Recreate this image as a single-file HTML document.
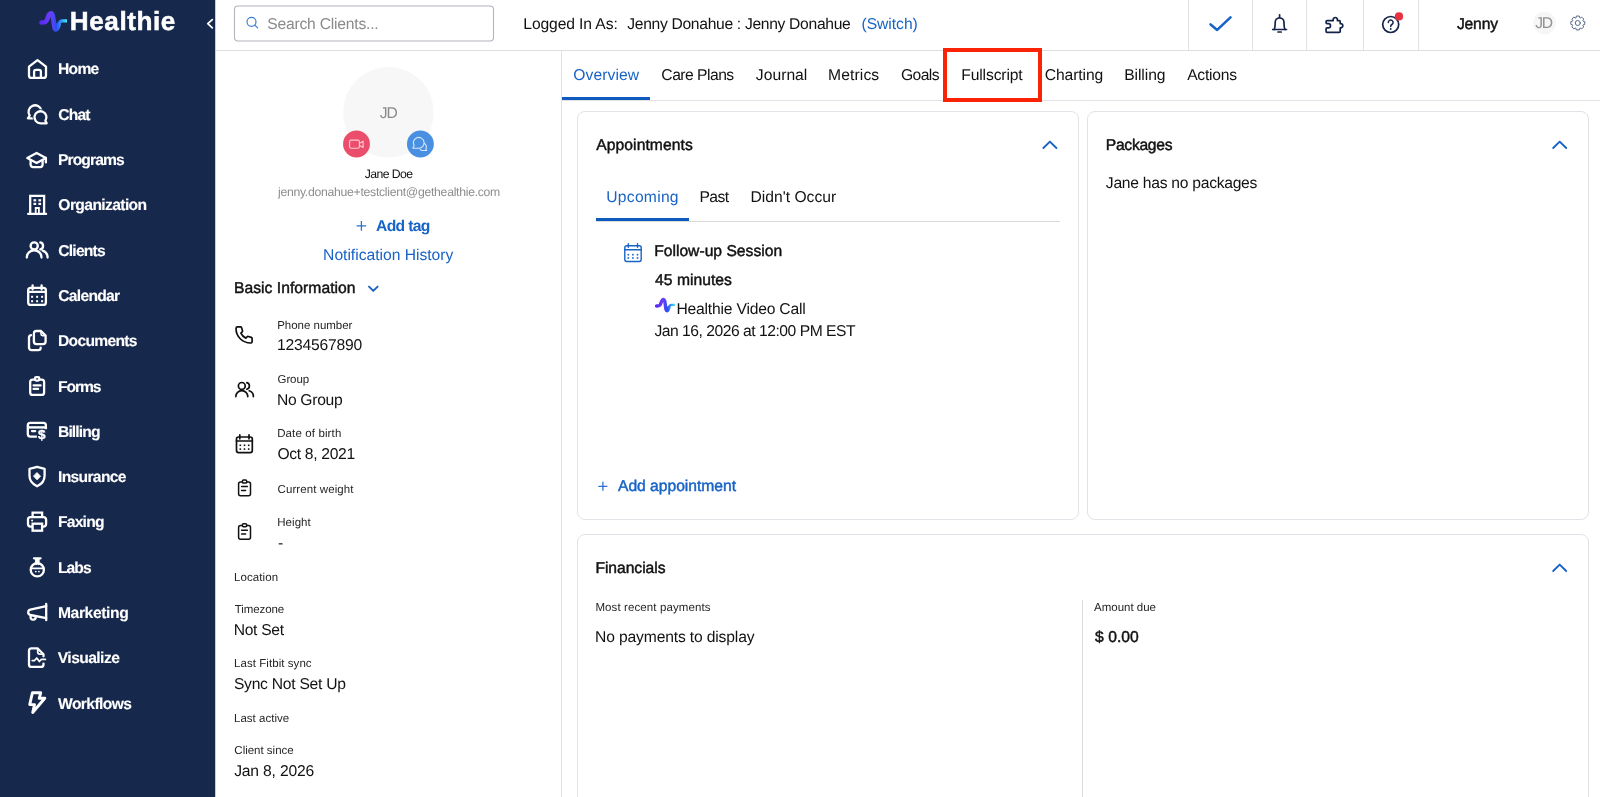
<!DOCTYPE html>
<html lang="en"><head><meta charset="utf-8"><title>Healthie</title>
<style>
html,body{margin:0;padding:0;background:#fff;}
body{width:1600px;height:797px;overflow:hidden;font-family:"Liberation Sans",sans-serif;}
#app{position:relative;width:1600px;height:797px;overflow:hidden;background:#fff;}
.x{will-change:transform;text-rendering:geometricPrecision;}
.x{position:absolute;white-space:pre;font-weight:400;}
.b{font-weight:700;}
.m{-webkit-text-stroke:0.45px currentColor;}
.abs{position:absolute;}
.card{position:absolute;border:1px solid #e1e3e8;border-radius:8px;background:#fff;box-sizing:border-box;}
svg{position:absolute;overflow:visible;}

</style></head>
<body>
<div id="app">
<!-- sidebar -->
<div class="abs" style="left:0;top:0;width:215px;height:797px;background:#17284d;"></div>
<div class="abs" style="left:215px;top:0;width:1px;height:797px;background:#c9ccd3;"></div>
<!-- topbar border -->
<div class="abs" style="left:216px;top:50px;width:1384px;height:1px;background:#dedede;"></div>
<!-- search box -->
<!-- topbar separators -->
<div class="abs" style="left:1188px;top:0;width:1px;height:50px;background:#e2e2e2;"></div>
<div class="abs" style="left:1252px;top:0;width:1px;height:50px;background:#e2e2e2;"></div>
<div class="abs" style="left:1306px;top:0;width:1px;height:50px;background:#e2e2e2;"></div>
<div class="abs" style="left:1363px;top:0;width:1px;height:50px;background:#e2e2e2;"></div>
<div class="abs" style="left:1418px;top:0;width:1px;height:50px;background:#e2e2e2;"></div>
<!-- client panel right border -->
<div class="abs" style="left:561px;top:51px;width:1px;height:746px;background:#e2e2e2;"></div>
<!-- avatar -->
<!-- user avatar top right -->
<!-- tabs border & underline -->
<div class="abs" style="left:562px;top:100px;width:1038px;height:1px;background:#e2e2e2;"></div>
<div class="abs" style="left:562px;top:97px;width:88px;height:3px;background:#0f5abf;"></div>
<!-- cards -->
<div class="card" style="left:577px;top:111px;width:502px;height:409px;"></div>
<div class="card" style="left:1087px;top:111px;width:502px;height:409px;"></div>
<div class="card" style="left:577px;top:534px;width:1012px;height:300px;"></div>
<!-- appt subtabs line -->
<div class="abs" style="left:596px;top:221px;width:464px;height:1px;background:#d9d9d9;"></div>
<div class="abs" style="left:596px;top:218px;width:93px;height:3px;background:#0f5abf;"></div>
<!-- financial divider -->
<div class="abs" style="left:1082px;top:600px;width:1px;height:197px;background:#dcdcdc;"></div>
<!-- red highlight -->
<div class="abs" style="left:943px;top:48px;width:99px;height:54px;border:4px solid #fb2306;box-sizing:border-box;"></div>
<svg width="1600" height="797" viewBox="0 0 1600 797" style="left:0;top:0;" fill="none" stroke-linecap="round" stroke-linejoin="round">
<defs>
<linearGradient id="lg" gradientUnits="userSpaceOnUse" x1="39" y1="0" x2="67" y2="0">
<stop offset="0" stop-color="#5426f4"/><stop offset="0.42" stop-color="#6a3ff8"/><stop offset="0.62" stop-color="#2c4cf6"/><stop offset="0.8" stop-color="#2f9af6"/><stop offset="1" stop-color="#43e8fa"/>
</linearGradient>
</defs>
<rect x="234.5" y="6" width="259" height="35" rx="3.5" stroke="#b3b4bc" stroke-width="1.1" fill="#fff"/>
<circle cx="388.4" cy="112.2" r="45.2" fill="#f7f7f7"/>
<circle cx="356.5" cy="143.95" r="13.45" fill="#eb4e6c"/>
<circle cx="420.4" cy="143.95" r="13.45" fill="#4990e2"/>
<circle cx="1544.5" cy="23" r="11.4" fill="#f6f6f6"/>
<!-- logo mark -->
<g id="logo"><path d="M41.5 22.5 C45 22.5 46.2 22.3 47.4 18.8 C48.6 15.2 49.3 13.3 51 13.3 C52.7 13.3 53.1 16.6 53.7 21.5 C54.3 26.4 54.5 29.3 55.9 29.3 C57.3 29.3 57.8 27 58.6 24.6" stroke="url(#lg)" stroke-width="4.7"/>
<path d="M58.1 26.2 C59 22.6 59.8 20.9 62 20.9 H67" stroke="url(#lg)" stroke-width="3.1" stroke-linecap="butt"/></g>
<!-- collapse chevron -->
<path d="M212.3 19.6 L207.8 23.7 L212.3 27.8" stroke="#fff" stroke-width="1.8"/>
<g stroke="#fff" stroke-width="2.3">
<!-- home -->
<path d="M29 66.6 L37.5 60.1 L46 66.6 V75.4 a2.5 2.5 0 0 1 -2.5 2.5 H31.5 a2.5 2.5 0 0 1 -2.5 -2.5 Z"/>
<path d="M34.1 77.9 V71.6 a1.8 1.8 0 0 1 1.8 -1.8 h3.2 a1.8 1.8 0 0 1 1.8 1.8 V77.9"/>
<!-- chat -->
<path d="M35 118.3 H27.9 L29.7 115.5 A6.5 6.5 0 1 1 35 118.3 Z"/>
<circle cx="40.5" cy="117.3" r="6" fill="#17284d" stroke="#17284d" stroke-width="4"/>
<path d="M40.5 123.3 H46.7 L45.4 120.7 A6 6 0 1 0 40.5 123.3 Z" fill="#17284d"/>
<!-- programs -->
<path d="M36.6 153 L45.9 158 L36.6 163 L27.3 158 Z"/>
<path d="M45.9 158 V162.4"/>
<path d="M30.6 160.4 V164.6 a2.5 2.5 0 0 0 2.5 2.5 H40.1 a2.5 2.5 0 0 0 2.5 -2.5 V160.4"/>
<!-- organization -->
<path d="M30.2 213.9 V195.8 H44.1 V213.9 M28.2 213.9 H46.1" stroke-linejoin="miter"/>
<path d="M35.7 213.5 V208 H38.9 V213.5" stroke-linejoin="miter" stroke-width="1.8"/>
<g fill="#fff" stroke="none"><rect x="33.5" y="199.2" width="2.7" height="2.2"/><rect x="38.4" y="199.2" width="2.7" height="2.2"/><rect x="33.5" y="202.8" width="2.7" height="2.2"/><rect x="38.4" y="202.8" width="2.7" height="2.2"/></g>
<!-- clients -->
<circle cx="34.2" cy="245.9" r="3.6"/>
<path d="M26.8 257.6 a7.35 7.35 0 0 1 14.7 0"/>
<path d="M40.3 242.4 A3.6 3.6 0 0 1 40.3 249.4"/>
<path d="M42.6 250.7 A7.3 7.3 0 0 1 47.6 257.6"/>
<!-- calendar -->
<rect x="28.2" y="287.8" width="17.7" height="17.1" rx="2.5"/>
<path d="M32.6 285.3 V289.3 M41.6 285.3 V289.3 M28.2 291.8 H45.9"/>
<g fill="#fff" stroke="none"><rect x="31.1" y="295.8" width="2" height="2"/><rect x="36.1" y="295.8" width="2" height="2"/><rect x="41.1" y="295.8" width="2" height="2"/><rect x="31.1" y="300.2" width="2" height="2"/><rect x="36.1" y="300.2" width="2" height="2"/><rect x="41.1" y="300.2" width="2" height="2"/></g>
<!-- documents -->
<path d="M36.4 331 H41 L45.6 335.6 V341.6 a2.5 2.5 0 0 1 -2.5 2.5 H36.4 a2.5 2.5 0 0 1 -2.5 -2.5 V333.5 a2.5 2.5 0 0 1 2.5 -2.5 Z"/>
<path d="M41 331.4 V334 a1.6 1.6 0 0 0 1.6 1.6 H45.2" stroke-width="1.6"/>
<path d="M31 335.2 a2.4 2.4 0 0 0 -2 2.4 V347.6 a2.5 2.5 0 0 0 2.5 2.5 H38.2 a2.5 2.5 0 0 0 2.5 -2.4"/>
<!-- forms -->
<rect x="30.2" y="379.6" width="13.9" height="15.3" rx="2.5"/>
<rect x="35" y="377.2" width="4.3" height="3.4" rx="1.3" fill="#17284d"/>
<path d="M33.6 385.4 H40.6 M33.6 388.9 H38.1"/>
<!-- billing -->
<rect x="27.8" y="422.9" width="18.1" height="13.7" rx="2.5"/>
<path d="M28.5 427.4 H45.2" stroke-width="2.4" stroke-linecap="butt"/>
<path d="M32 431.1 H35.2"/>
<!-- insurance -->
<path d="M37.1 466.9 L44.6 468.8 V475.8 C44.6 481 41.2 484.4 37.1 486.3 C33 484.4 29.5 481 29.5 475.8 V468.8 Z"/>
<path d="M37.1 472.6 L40.7 476.3 L37.1 480 L33.5 476.3 Z" fill="#fff" stroke-width="0.6"/>
<!-- faxing -->
<path d="M32.6 516.6 V512.6 H42.1 V516.6" stroke-linejoin="miter"/>
<path d="M32 526.6 H30.5 a2.5 2.5 0 0 1 -2.5 -2.5 V519.6 a2.5 2.5 0 0 1 2.5 -2.5 H43.6 a2.5 2.5 0 0 1 2.5 2.5 V524.1 a2.5 2.5 0 0 1 -2.5 2.5 H42.6"/>
<rect x="32.6" y="523.7" width="9.5" height="7" stroke-linejoin="miter"/>
<circle cx="32.1" cy="520.5" r="1" fill="#fff" stroke="none"/>
<!-- labs -->
<path d="M34 558.3 H40.6 M36.2 558.6 V564 M38.5 558.6 V564"/>
<circle cx="37.3" cy="569.8" r="6.6"/>
<path d="M31 568.4 H43.6" stroke-width="1.8"/>
<circle cx="35.8" cy="571.6" r="0.9" fill="#fff" stroke="none"/><circle cx="38.9" cy="571.6" r="0.9" fill="#fff" stroke="none"/>
<!-- marketing -->
<path d="M46.2 604 V620.2"/>
<path d="M46.2 606.1 L30.3 609.7 A2.72 2.72 0 0 0 30.3 615 L46.2 618.1"/>
<path d="M30.6 615.6 V617.6 a2 2 0 0 0 2 2 H33.6 a2 2 0 0 0 2 -2 V616.6"/>
<!-- visualize -->
<path d="M43.5 656.3 V654.3 L37.5 648.3 H31.5 a2.5 2.5 0 0 0 -2.5 2.5 V664.4 a2.5 2.5 0 0 0 2.5 2.5 H41 a2.5 2.5 0 0 0 2.5 -2.5 V663.6"/>
<path d="M37.7 648.8 V652 a2.2 2.2 0 0 0 2.2 2.2 H43" stroke-width="1.7"/>
<path d="M32.2 660.6 H34.4 L36.8 658 L39.3 661.5 L41.4 659.3 H45.4" stroke-width="1.7"/>
<!-- workflows -->
<path d="M32.4 692.8 H40.7 L39.2 698.3 H44.8 L32.7 712.5 L34.5 704.6 H29.7 Z" stroke-width="2.9"/>
</g>
<!-- billing $ halo -->
<rect x="36.9" y="429.2" width="11" height="13" fill="#17284d"/>
<!-- search icon -->
<circle cx="251.5" cy="21.8" r="4.5" stroke="#3b7fd6" stroke-width="1.2"/>
<path d="M254.9 25.2 L257.6 27.9" stroke="#3b7fd6" stroke-width="1.2"/>
<!-- check -->
<path d="M1210.6 24.4 L1217.2 29.9 L1230.5 17.4" stroke="#1863c6" stroke-width="2.6"/>
<!-- bell -->
<g stroke="#14234a" stroke-width="1.7">
<path d="M1272.7 29.5 H1286.5"/>
<path d="M1274.2 29.5 C1275.3 27.6 1275.2 25.2 1275.2 22.3 a4.4 4.4 0 0 1 8.8 0 C1284 25.2 1283.9 27.6 1285 29.5 M1279.6 14.8 V17"/>
<path d="M1278 32 H1281.2"/>
<!-- puzzle -->
<path d="M1333.2 19.6 a2.1 2.1 0 1 1 4.2 0 V20.6 H1339.3 a0.9 0.9 0 0 1 0.9 0.9 V23.6 H1340.7 a2.1 2.1 0 1 1 0 4.2 H1340.2 V31.4 a0.9 0.9 0 0 1 -0.9 0.9 H1327 a0.9 0.9 0 0 1 -0.9 -0.9 V28.8 a0.9 0.9 0 0 1 0.9 -0.9 H1328.4 a2.1 2.1 0 1 0 0 -4.2 H1327 a0.9 0.9 0 0 1 -0.9 -0.9 V21.5 a0.9 0.9 0 0 1 0.9 -0.9 H1333.2 Z"/>
<!-- help -->
<circle cx="1390.7" cy="24.5" r="8"/>
<path d="M1388.3 22.4 a2.4 2.4 0 1 1 3.6 2.1 c-0.8 0.5 -1.2 0.9 -1.2 1.9" stroke-width="1.5"/>
<circle cx="1390.7" cy="29" r="0.95" fill="#14234a" stroke="none"/>
</g>
<circle cx="1399" cy="16.4" r="4.1" fill="#e9303f"/>
<!-- gear -->
<g stroke="#5a688f" stroke-width="1">
<circle cx="1577.8" cy="23" r="2.5"/>
<path d="M1575.96 17.71 L1576.39 16.04 L1579.21 16.04 L1579.64 17.71 L1580.23 17.96 L1581.72 17.08 L1583.72 19.08 L1582.84 20.57 L1583.09 21.16 L1584.76 21.59 L1584.76 24.41 L1583.09 24.84 L1582.84 25.43 L1583.72 26.92 L1581.72 28.92 L1580.23 28.04 L1579.64 28.29 L1579.21 29.96 L1576.39 29.96 L1575.96 28.29 L1575.37 28.04 L1573.88 28.92 L1571.88 26.92 L1572.76 25.43 L1572.51 24.84 L1570.84 24.41 L1570.84 21.59 L1572.51 21.16 L1572.76 20.57 L1571.88 19.08 L1573.88 17.08 L1575.37 17.96 Z"/>
</g>
<!-- avatar action icons -->
<g stroke="#ffd0d9" stroke-width="1.1" opacity="0.95">
<rect x="349.6" y="140.1" width="9.8" height="8.2" rx="1.6"/>
<path d="M359.6 143.2 L363.1 141.2 V147.4 L359.6 145.4"/>
</g>
<g stroke="#d9e8fb" stroke-width="1.1">
<path d="M424.3 143.6 A3.9 3.9 0 0 1 425.9 149 L426.6 150.5 H422.8 A3.9 3.9 0 0 1 420.2 149.5"/>
<path d="M418.6 148.2 H412.9 L414.1 145.6 A5.4 5.4 0 1 1 418.6 148.2 Z"/>
</g>
<!-- plus signs -->
<path d="M356.6 225.9 H366.2 M361.4 221.1 V230.7" stroke="#2a70cc" stroke-width="1.25" stroke-linecap="butt"/>
<path d="M598.4 486.3 H607.4 M602.9 481.8 V490.8" stroke="#2a70cc" stroke-width="1.25" stroke-linecap="butt"/>
<!-- Basic info chevron -->
<path d="M369 286.6 L373.3 290.9 L377.6 286.6" stroke="#1863c6" stroke-width="1.9"/>
<!-- card chevrons -->
<path d="M1043.4 148 L1049.9 141.6 L1056.4 148" stroke="#1863c6" stroke-width="1.9"/>
<path d="M1553.2 148 L1559.7 141.6 L1566.2 148" stroke="#1863c6" stroke-width="1.9"/>
<path d="M1553.2 571 L1559.7 564.6 L1566.2 571" stroke="#1863c6" stroke-width="1.9"/>
<!-- client panel icons -->
<g stroke="#111" stroke-width="1.7">
<!-- phone -->
<path d="M237.6 326.9 h2.9 a1.2 1.2 0 0 1 1.1 0.8 l0.9 3 a1.2 1.2 0 0 1 -0.3 1.2 l-1.3 1.3 a9.6 9.6 0 0 0 4.9 4.9 l1.3 -1.3 a1.2 1.2 0 0 1 1.2 -0.3 l3 0.9 a1.2 1.2 0 0 1 0.8 1.1 v2.9 a1.6 1.6 0 0 1 -1.6 1.6 A14.5 14.5 0 0 1 236 328.500 a1.6 1.6 0 0 1 1.6 -1.6 Z"/>
<!-- group -->
<circle cx="241.8" cy="385.9" r="3.4"/>
<path d="M235.8 396.6 a6 6 0 0 1 12 0"/>
<path d="M246.8 382.6 A3.4 3.4 0 0 1 246.8 389.2"/>
<path d="M249.2 390.8 A6 6 0 0 1 253.4 396.6"/>
<!-- calendar -->
<rect x="236.5" y="437" width="15.8" height="15.6" rx="2"/>
<path d="M239.8 434.8 V438.8 M249 434.8 V438.8 M236.5 441 H252.3"/>
</g>
<g fill="#111"><rect x="239.5" y="444.5" width="1.6" height="1.6"/><rect x="243.7" y="444.5" width="1.6" height="1.6"/><rect x="247.9" y="444.5" width="1.6" height="1.6"/><rect x="239.5" y="448.3" width="1.6" height="1.6"/><rect x="243.7" y="448.3" width="1.6" height="1.6"/><rect x="247.9" y="448.3" width="1.6" height="1.6"/></g>
<g stroke="#111" stroke-width="1.5">
<rect x="238.6" y="482" width="11.9" height="13.7" rx="2"/>
<rect x="242.4" y="480.1" width="4.3" height="3" rx="1.1" fill="#fff"/>
<path d="M241.6 486.6 H247.4 M241.6 490.4 H245.6"/>
<rect x="238.6" y="525.6" width="11.9" height="13.7" rx="2"/>
<rect x="242.4" y="523.7" width="4.3" height="3" rx="1.1" fill="#fff"/>
<path d="M241.6 530.2 H247.4 M241.6 534 H245.6"/>
</g>
<!-- appointment calendar -->
<g stroke="#1863c6" stroke-width="1.4">
<rect x="624.8" y="245.8" width="16.4" height="15.7" rx="2"/>
<path d="M628.3 243.7 V247.3 M637.5 243.7 V247.3 M624.8 249.8 H641.2"/>
</g>
<g fill="#1863c6"><rect x="627.5" y="253.9" width="1.6" height="1.6"/><rect x="632.1" y="253.9" width="1.6" height="1.6"/><rect x="636.7" y="253.9" width="1.6" height="1.6"/><rect x="627.5" y="257.2" width="1.6" height="1.6"/><rect x="632.1" y="257.2" width="1.6" height="1.6"/><rect x="636.7" y="257.2" width="1.6" height="1.6"/></g>
<!-- small logo -->
<g transform="translate(626.7 289.8) scale(0.72)"><use href="#logo"/></g>
</svg>
<div class="dl" style="position:absolute;white-space:pre;font-weight:700;will-change:transform;left:37.5px;top:427.4px;font-size:13.5px;line-height:15px;color:#fff;-webkit-text-stroke:0.4px #fff;">$</div>

<div class="x b" style="left:57px;padding-left:0.96px;top:59px;font-size:15.67px;line-height:21px;color:#ffffff;letter-spacing:-0.723px;-webkit-text-stroke:0.12px #fff;">Home</div>
<div class="x b" style="left:58px;padding-left:0.30px;top:105px;font-size:15.67px;line-height:21px;color:#ffffff;letter-spacing:-0.886px;-webkit-text-stroke:0.12px #fff;">Chat</div>
<div class="x b" style="left:57px;padding-left:0.96px;top:150px;font-size:15.67px;line-height:21px;color:#ffffff;letter-spacing:-0.907px;-webkit-text-stroke:0.12px #fff;">Programs</div>
<div class="x b" style="left:58px;padding-left:0.36px;top:195px;font-size:15.67px;line-height:21px;color:#ffffff;letter-spacing:-0.629px;-webkit-text-stroke:0.12px #fff;">Organization</div>
<div class="x b" style="left:58px;padding-left:0.30px;top:241px;font-size:15.67px;line-height:21px;color:#ffffff;letter-spacing:-0.792px;-webkit-text-stroke:0.12px #fff;">Clients</div>
<div class="x b" style="left:58px;padding-left:0.30px;top:286px;font-size:15.67px;line-height:21px;color:#ffffff;letter-spacing:-0.736px;-webkit-text-stroke:0.12px #fff;">Calendar</div>
<div class="x b" style="left:57px;padding-left:0.96px;top:331px;font-size:15.67px;line-height:21px;color:#ffffff;letter-spacing:-0.712px;-webkit-text-stroke:0.12px #fff;">Documents</div>
<div class="x b" style="left:57px;padding-left:0.96px;top:377px;font-size:15.67px;line-height:21px;color:#ffffff;letter-spacing:-1.088px;-webkit-text-stroke:0.12px #fff;">Forms</div>
<div class="x b" style="left:57px;padding-left:0.96px;top:422px;font-size:15.67px;line-height:21px;color:#ffffff;letter-spacing:-0.870px;-webkit-text-stroke:0.12px #fff;">Billing</div>
<div class="x b" style="left:57px;padding-left:0.96px;top:467px;font-size:15.67px;line-height:21px;color:#ffffff;letter-spacing:-0.676px;-webkit-text-stroke:0.12px #fff;">Insurance</div>
<div class="x b" style="left:57px;padding-left:0.96px;top:512px;font-size:15.67px;line-height:21px;color:#ffffff;letter-spacing:-0.776px;-webkit-text-stroke:0.12px #fff;">Faxing</div>
<div class="x b" style="left:57px;padding-left:0.96px;top:558px;font-size:15.67px;line-height:21px;color:#ffffff;letter-spacing:-0.961px;-webkit-text-stroke:0.12px #fff;">Labs</div>
<div class="x b" style="left:57px;padding-left:0.96px;top:603px;font-size:15.67px;line-height:21px;color:#ffffff;letter-spacing:-0.392px;-webkit-text-stroke:0.12px #fff;">Marketing</div>
<div class="x b" style="left:57px;padding-left:0.80px;top:648px;font-size:15.67px;line-height:21px;color:#ffffff;letter-spacing:-0.585px;-webkit-text-stroke:0.12px #fff;">Visualize</div>
<div class="x b" style="left:58px;padding-left:0.06px;top:694px;font-size:15.67px;line-height:21px;color:#ffffff;letter-spacing:-0.616px;-webkit-text-stroke:0.12px #fff;">Workflows</div>
<div class="x b" style="left:69px;padding-left:0.82px;top:4px;font-size:26.12px;line-height:34px;color:#ffffff;letter-spacing:0.569px;-webkit-text-stroke:0.5px #fff;">Healthie</div>
<div class="x" style="left:267px;padding-left:0.31px;top:14px;font-size:15.67px;line-height:21px;color:#8b8b8b;letter-spacing:-0.220px;">Search Clients...</div>
<div class="x" style="left:523px;padding-left:0.30px;top:14px;font-size:15.67px;line-height:21px;color:#121212;letter-spacing:-0.110px;">Logged In As:</div>
<div class="x" style="left:627px;padding-left:0.26px;top:14px;font-size:15.67px;line-height:21px;color:#121212;letter-spacing:-0.318px;">Jenny Donahue : Jenny Donahue</div>
<div class="x" style="left:861px;padding-left:0.48px;top:14px;font-size:15.67px;line-height:21px;color:#1863c6;letter-spacing:-0.031px;">(Switch)</div>
<div class="x m" style="left:1456px;padding-left:0.94px;top:14px;font-size:15.67px;line-height:21px;color:#121212;letter-spacing:-0.179px;">Jenny</div>
<div class="x" style="left:1535px;padding-left:0.36px;top:13px;font-size:15.67px;line-height:21px;color:#929292;letter-spacing:-1.476px;">JD</div>
<div class="x" style="left:379px;padding-left:0.76px;top:103px;font-size:15.67px;line-height:21px;color:#8a8a8a;letter-spacing:-1.076px;">JD</div>
<div class="x" style="left:364px;padding-left:0.68px;top:165px;font-size:12.24px;line-height:18px;color:#121212;letter-spacing:-0.560px;">Jane Doe</div>
<div class="x" style="left:277px;padding-left:0.97px;top:183px;font-size:12.24px;line-height:18px;color:#8d8d8d;letter-spacing:-0.289px;">jenny.donahue+testclient@gethealthie.com</div>
<div class="x b" style="left:376px;padding-left:0.02px;top:216px;font-size:15.67px;line-height:21px;color:#1863c6;letter-spacing:-0.658px;">Add tag</div>
<div class="x" style="left:323px;padding-left:0.10px;top:245px;font-size:15.67px;line-height:21px;color:#1863c6;letter-spacing:-0.019px;">Notification History</div>
<div class="x m" style="left:233px;padding-left:0.97px;top:278px;font-size:15.67px;line-height:21px;color:#121212;letter-spacing:0.036px;">Basic Information</div>
<div class="x" style="left:277px;padding-left:0.20px;top:318px;font-size:11.49px;line-height:16px;color:#262626;letter-spacing:-0.010px;">Phone number</div>
<div class="x" style="left:276px;padding-left:0.99px;top:335px;font-size:15.67px;line-height:21px;color:#121212;letter-spacing:-0.200px;">1234567890</div>
<div class="x" style="left:277px;padding-left:0.57px;top:372px;font-size:11.49px;line-height:16px;color:#262626;letter-spacing:-0.107px;">Group</div>
<div class="x" style="left:276px;padding-left:0.88px;top:390px;font-size:15.67px;line-height:21px;color:#121212;letter-spacing:-0.300px;">No Group</div>
<div class="x" style="left:277px;padding-left:0.20px;top:426px;font-size:11.49px;line-height:16px;color:#262626;letter-spacing:0.127px;">Date of birth</div>
<div class="x" style="left:277px;padding-left:0.43px;top:444px;font-size:15.67px;line-height:21px;color:#121212;letter-spacing:-0.322px;">Oct 8, 2021</div>
<div class="x" style="left:277px;padding-left:0.57px;top:482px;font-size:11.49px;line-height:16px;color:#262626;letter-spacing:0.090px;">Current weight</div>
<div class="x" style="left:277px;padding-left:0.19px;top:515px;font-size:11.49px;line-height:16px;color:#262626;letter-spacing:0.078px;">Height</div>
<div class="x" style="left:277px;padding-left:0.92px;top:533px;font-size:15.67px;line-height:21px;color:#121212;">-</div>
<div class="x" style="left:234px;padding-left:0.00px;top:570px;font-size:11.49px;line-height:16px;color:#262626;letter-spacing:0.096px;">Location</div>
<div class="x" style="left:234px;padding-left:0.71px;top:602px;font-size:11.49px;line-height:16px;color:#262626;letter-spacing:-0.076px;">Timezone</div>
<div class="x" style="left:233px;padding-left:0.70px;top:620px;font-size:15.67px;line-height:21px;color:#121212;letter-spacing:-0.297px;">Not Set</div>
<div class="x" style="left:234px;padding-left:0.00px;top:656px;font-size:11.49px;line-height:16px;color:#262626;letter-spacing:0.066px;">Last Fitbit sync</div>
<div class="x" style="left:233px;padding-left:0.95px;top:674px;font-size:15.67px;line-height:21px;color:#121212;letter-spacing:-0.270px;">Sync Not Set Up</div>
<div class="x" style="left:234px;padding-left:0.00px;top:711px;font-size:11.49px;line-height:16px;color:#262626;letter-spacing:0.029px;">Last active</div>
<div class="x" style="left:234px;padding-left:0.37px;top:743px;font-size:11.49px;line-height:16px;color:#262626;letter-spacing:-0.006px;">Client since</div>
<div class="x" style="left:234px;padding-left:0.13px;top:761px;font-size:15.67px;line-height:21px;color:#121212;letter-spacing:-0.164px;">Jan 8, 2026</div>
<div class="x" style="left:573px;padding-left:0.33px;top:65px;font-size:15.67px;line-height:21px;color:#1863c6;letter-spacing:0.081px;">Overview</div>
<div class="x" style="left:661px;padding-left:0.37px;top:65px;font-size:15.67px;line-height:21px;color:#121212;letter-spacing:-0.516px;">Care Plans</div>
<div class="x" style="left:755px;padding-left:0.86px;top:65px;font-size:15.67px;line-height:21px;color:#121212;letter-spacing:0.018px;">Journal</div>
<div class="x" style="left:828px;padding-left:0.08px;top:65px;font-size:15.67px;line-height:21px;color:#121212;letter-spacing:0.112px;">Metrics</div>
<div class="x" style="left:900px;padding-left:0.98px;top:65px;font-size:15.67px;line-height:21px;color:#121212;letter-spacing:-0.570px;">Goals</div>
<div class="x" style="left:961px;padding-left:0.30px;top:65px;font-size:15.67px;line-height:21px;color:#121212;letter-spacing:-0.142px;">Fullscript</div>
<div class="x" style="left:1044px;padding-left:0.77px;top:65px;font-size:15.67px;line-height:21px;color:#121212;letter-spacing:-0.104px;">Charting</div>
<div class="x" style="left:1124px;padding-left:0.20px;top:65px;font-size:15.67px;line-height:21px;color:#121212;letter-spacing:-0.074px;">Billing</div>
<div class="x" style="left:1187px;padding-left:0.14px;top:65px;font-size:15.67px;line-height:21px;color:#121212;letter-spacing:-0.220px;">Actions</div>
<div class="x m" style="left:596px;padding-left:0.19px;top:135px;font-size:15.67px;line-height:21px;color:#121212;letter-spacing:0.079px;">Appointments</div>
<div class="x" style="left:606px;padding-left:0.28px;top:187px;font-size:15.67px;line-height:21px;color:#1863c6;letter-spacing:0.260px;">Upcoming</div>
<div class="x" style="left:699px;padding-left:0.50px;top:187px;font-size:15.67px;line-height:21px;color:#121212;letter-spacing:-0.612px;">Past</div>
<div class="x" style="left:750px;padding-left:0.51px;top:187px;font-size:15.67px;line-height:21px;color:#121212;">Didn&#x27;t Occur</div>
<div class="x m" style="left:654px;padding-left:0.17px;top:241px;font-size:15.67px;line-height:21px;color:#121212;letter-spacing:0.005px;">Follow-up Session</div>
<div class="x m" style="left:655px;padding-left:0.05px;top:270px;font-size:15.67px;line-height:21px;color:#121212;letter-spacing:0.034px;">45 minutes</div>
<div class="x" style="left:676px;padding-left:0.50px;top:299px;font-size:15.67px;line-height:21px;color:#121212;letter-spacing:-0.207px;">Healthie Video Call</div>
<div class="x" style="left:654px;padding-left:0.46px;top:321px;font-size:15.67px;line-height:21px;color:#121212;letter-spacing:-0.482px;">Jan 16, 2026 at 12:00 PM EST</div>
<div class="x m" style="left:617px;padding-left:0.98px;top:476px;font-size:15.67px;line-height:21px;color:#1863c6;letter-spacing:-0.022px;">Add appointment</div>
<div class="x m" style="left:1105px;padding-left:0.72px;top:135px;font-size:15.67px;line-height:21px;color:#121212;letter-spacing:-0.272px;">Packages</div>
<div class="x" style="left:1105px;padding-left:0.86px;top:173px;font-size:15.67px;line-height:21px;color:#121212;letter-spacing:-0.271px;">Jane has no packages</div>
<div class="x m" style="left:595px;padding-left:0.42px;top:558px;font-size:15.67px;line-height:21px;color:#121212;letter-spacing:-0.044px;">Financials</div>
<div class="x" style="left:595px;padding-left:0.40px;top:600px;font-size:11.49px;line-height:16px;color:#262626;letter-spacing:0.111px;">Most recent payments</div>
<div class="x" style="left:595px;padding-left:0.08px;top:627px;font-size:15.67px;line-height:21px;color:#121212;letter-spacing:-0.156px;">No payments to display</div>
<div class="x" style="left:1094px;padding-left:0.06px;top:600px;font-size:11.49px;line-height:16px;color:#262626;letter-spacing:-0.008px;">Amount due</div>
<div class="x m" style="left:1094px;padding-left:0.99px;top:627px;font-size:15.67px;line-height:21px;color:#121212;letter-spacing:0.056px;">$ 0.00</div>
</div>
</body></html>
